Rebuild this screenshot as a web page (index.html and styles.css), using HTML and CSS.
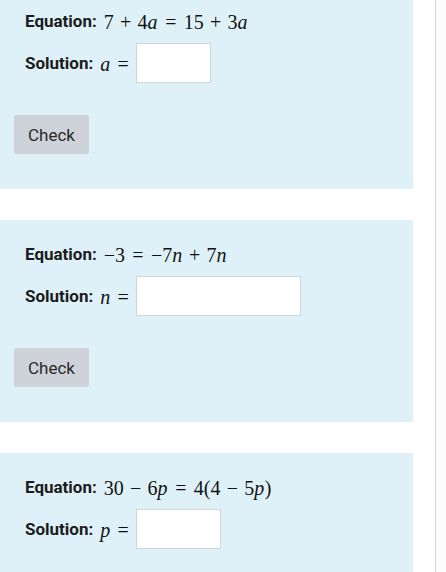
FILE: index.html
```html
<!DOCTYPE html>
<html>
<head>
<meta charset="utf-8">
<link rel="stylesheet" href="styles.css">
</head>
<body>
<div class="layout">
  <main class="main">
    <section class="panel">
      <div class="line eq"><b>Equation:</b> <span class="math">7<span class="bin">+</span>4<i>a</i><span class="rel">=</span>15<span class="bin">+</span>3<i>a</i></span></div>
      <div class="line sol"><b>Solution:</b> <span class="math"><i>a</i><span class="rel rel-end">=</span></span><input class="answer" type="text" style="width:75px"></div>
      <button class="check">Check</button>
    </section>
    <section class="panel">
      <div class="line eq"><b>Equation:</b> <span class="math">−3<span class="rel">=</span>−7<i>n</i><span class="bin">+</span>7<i>n</i></span></div>
      <div class="line sol"><b>Solution:</b> <span class="math"><i>n</i><span class="rel rel-end">=</span></span><input class="answer" type="text" style="width:165px"></div>
      <button class="check">Check</button>
    </section>
    <section class="panel">
      <div class="line eq"><b>Equation:</b> <span class="math">30<span class="bin">−</span>6<i>p</i><span class="rel">=</span>4(4<span class="bin">−</span>5<i>p</i>)</span></div>
      <div class="line sol"><b>Solution:</b> <span class="math"><i>p</i><span class="rel rel-end">=</span></span><input class="answer" type="text" style="width:85px"></div>
      <button class="check">Check</button>
    </section>
  </main>
  <aside class="side"></aside>
</div>
</body>
</html>
```

FILE: styles.css
```css
html, body {
  margin: 0;
  padding: 0;
  background: #ffffff;
  font-family: Roboto, "Liberation Sans", sans-serif;
  color: #1c1c1c;
  overflow: hidden;
}
.layout {
  display: flex;
  min-height: 572px;
}
.main {
  width: 413px;
  padding-right: 22px;
  margin-top: -13px;
  display: flex;
  flex-direction: column;
  gap: 31px;
}
.side {
  flex: 1;
  border-left: 1px solid #d6d6d6;
  background: #fbfbfb;
}
.panel {
  background: #dff1f8;
  padding: 20px 14px 35px;
  display: flex;
  flex-direction: column;
  align-items: flex-start;
}
.line {
  padding-left: 11px;
  font-size: 17px;
  display: flex;
  align-items: center;
  white-space: nowrap;
}
.line b {
  font-weight: 700;
  margin-right: 7px;
}
.eq {
  height: 28px;
}
.sol {
  height: 40px;
  margin-top: 8px;
}
.math {
  font-family: "Liberation Serif", "DejaVu Serif", serif;
  font-size: 20px;
  color: #111;
  padding-top: 2px;
}
.math i {
  font-style: italic;
  padding-right: 0.5px;
}
.bin {
  display: inline-block;
  width: 23.7px;
  text-align: center;
}
.rel {
  display: inline-block;
  width: 25.9px;
  text-align: center;
}
.rel-end {
  width: 25px;
  margin-right: 0;
}
.answer {
  box-sizing: border-box;
  height: 40px;
  border: 1px solid #cfd6da;
  background: #ffffff;
  margin: 0;
  padding: 0 6px;
  font-size: 16px;
}
.check {
  margin-top: 32px;
  width: 75px;
  height: 39px;
  border: none;
  border-radius: 2px;
  background: #ced3da;
  color: #2a2a2a;
  font-family: Roboto, "Liberation Sans", sans-serif;
  font-size: 17px;
  padding: 0;
}
```
